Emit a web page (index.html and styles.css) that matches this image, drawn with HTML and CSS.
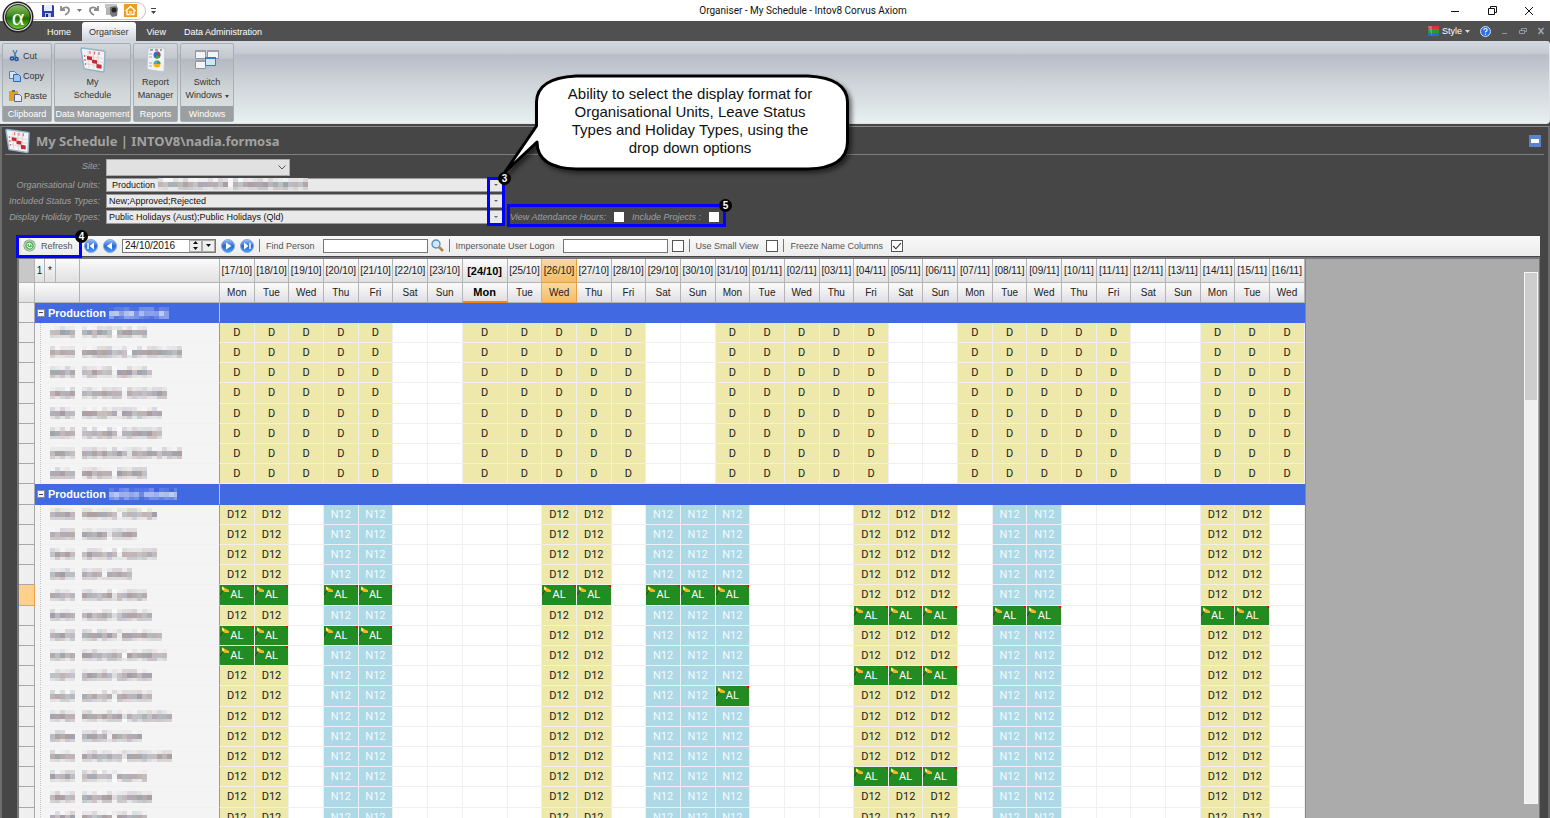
FILE: index.html
```html
<!DOCTYPE html>
<html lang="en">
<head>
    <meta charset="UTF-8">
    <meta name="viewport" content="width=device-width, initial-scale=1.0">
    <title>Organiser - My Schedule - Intov8 Corvus Axiom</title>
    <link rel="stylesheet" href="styles.css">
</head>
<body>
    <svg class="defs" width="0" height="0" aria-hidden="true">
        <defs>
            <linearGradient id="orb" x1="0" y1="0" x2="0" y2="1">
                <stop offset="0" stop-color="#8fbf6a"/>
                <stop offset=".45" stop-color="#3f8a1c"/>
                <stop offset=".55" stop-color="#1f6a08"/>
                <stop offset="1" stop-color="#6fd02c"/>
            </linearGradient>
            <linearGradient id="blueBall" x1="0" y1="0" x2="0" y2="1">
                <stop offset="0" stop-color="#9cc4f4"/>
                <stop offset=".5" stop-color="#2a66d8"/>
                <stop offset="1" stop-color="#4aa4f4"/>
            </linearGradient>
        </defs>
        <symbol id="schedule" viewBox="0 0 26 26">
            <path d="M2 1 L24 4 Q25 4 25 5 L24 24 Q24 25 23 25 L5 22 Q4 22 4 21 L1 2 Q1 1 2 1Z" fill="#f4f4f6" stroke="#8fb4c8" stroke-width="1.5"/>
            <path d="M4 8.500 L23 11.500 M4 12.500 L23 15.500 M5 16.500 L22 19.500 M8 4 L9 21 M13 4 L14 22 M18 5 L18 23" stroke="#e4c4c4" stroke-width=".7"/>
            <path d="M10 4v3 M14.500 4.500v3 M19 5v3 M4.500 8v2 M5 12v2 M5.500 16v2" stroke="#d66" stroke-width="1.100"/>
            <path d="M7 9l5 .8v3.400l-5-.8z M12 12.500l5 .8v3.600l-5-.8z M16.500 17l5 .8v4l-5-.8z" fill="#c62a34"/>
        </symbol>
    </svg>

    <header class="titlebar">
        <button class="orb" aria-label="Application menu">
            <svg viewBox="0 0 32 32" width="32" height="32">
                <circle cx="16" cy="16" r="15.500" fill="#222"/>
                <circle cx="16" cy="16" r="14" fill="#d8d8d8"/>
                <circle cx="16" cy="16" r="12.500" fill="url(#orb)" stroke="#222"/>
            </svg>
            <span class="alpha">α</span>
        </button>
        <div class="quick">
            <button aria-label="Save"><svg width="12" height="12" viewBox="0 0 12 12"><path d="M0 0h11l1 1v11H0z" fill="#2c3fae"/><path d="M2 0h8v6H2z" fill="#e8ecfa"/><path d="M3 8h6v4H3z" fill="#b9c4ee"/><path d="M4 9h2v3H4z" fill="#1b2a80"/></svg></button>
            <button aria-label="Undo"><svg width="11" height="11" viewBox="0 0 11 11"><path d="M1 1v4h4M1.500 5C4 1 9 2 9 5q0 3-4 5" fill="none" stroke="#8b8b8b" stroke-width="1.800"/></svg></button>
            <button aria-label="Undo list"><svg width="5" height="3" viewBox="0 0 5 3"><path d="M0 0h5L2.500 3z" fill="#777"/></svg></button>
            <button aria-label="Redo"><svg width="11" height="11" viewBox="0 0 11 11"><path d="M10 1v4H6M9.500 5C7 1 2 2 2 5q0 3 4 5" fill="none" stroke="#8b8b8b" stroke-width="1.800"/></svg></button>
            <button aria-label="Snapshot"><svg width="13" height="13" viewBox="0 0 13 13"><path d="M0 0h12v4H0z" fill="#c4c4c4"/><path d="M5 3l6-1 2 2-1 8-5 1-3-4z" fill="#777"/><circle cx="9" cy="6" r="2.500" fill="#222"/><path d="M1 4h4v7H1z" fill="#b4b4b4"/></svg></button>
            <button aria-label="Home"><svg width="13" height="13" viewBox="0 0 13 13"><rect width="13" height="13" fill="#f39a1c"/><path d="M1.500 7L6.500 2.500l5 4.500M3 6.500V10.500h7V6.500" fill="none" stroke="#fff" stroke-width="1.400"/><path d="M5 7h3v4H5z" fill="#fbd9a0"/></svg></button>
        </div>
        <button class="quick-more" aria-label="Customise toolbar"><svg width="5" height="6" viewBox="0 0 5 6"><path d="M0 0h5v1H0zM0 3h5L2.500 6z" fill="#444"/></svg></button>
        <h1>Organiser - My Schedule - Intov8 Corvus Axiom</h1>
        <div class="win-buttons">
            <button aria-label="Minimise"><svg width="10" height="10" viewBox="0 0 10 10"><path d="M1 5.500h8" stroke="#111"/></svg></button>
            <button aria-label="Restore"><svg width="10" height="10" viewBox="0 0 10 10"><path d="M1.500 2.500h6v6h-6zM3.500 2V.500h6v6H8" fill="none" stroke="#111"/></svg></button>
            <button aria-label="Close"><svg width="10" height="10" viewBox="0 0 10 10"><path d="M1 1l8 8M9 1L1 9" stroke="#111"/></svg></button>
        </div>
    </header>

    <nav class="tabs">
        <a href="#">Home</a>
        <a href="#" class="active">Organiser</a>
        <a href="#">View</a>
        <a href="#">Data Administration</a>
        <div class="tab-tools">
            <button class="style-btn">
                <svg width="11" height="10" viewBox="0 0 11 10"><path d="M0 0h11v3H0z" fill="#d33"/><path d="M0 3h11v4H0z" fill="#2b9a35"/><path d="M0 7h11v3H0z" fill="#36c"/><path d="M0 0h4v10z" fill="#8cf" opacity=".4"/></svg>
                Style
                <svg width="5" height="3" viewBox="0 0 5 3"><path d="M0 0h5L2.500 3z" fill="#ddd"/></svg>
            </button>
            <button aria-label="Help"><svg width="11" height="11" viewBox="0 0 11 11"><circle cx="5.500" cy="5.500" r="5" fill="#2f6fe0" stroke="#cfe0fa"/><path d="M3.800 4.200q0-1.700 1.700-1.700t1.700 1.500q0 1-1.700 1.800v.8M5.500 7.600v1.200" fill="none" stroke="#fff" stroke-width="1.100"/></svg></button>
            <button aria-label="Minimise document"><svg width="8" height="8" viewBox="0 0 8 8"><path d="M1 6.500h5" stroke="#8f9aa6"/></svg></button>
            <button aria-label="Restore document"><svg width="8" height="8" viewBox="0 0 8 8"><path d="M.500 3.500h5v3h-5zM2.500 3V1.500h5v3H6" fill="none" stroke="#8f9aa6"/></svg></button>
            <button aria-label="Close document"><svg width="8" height="8" viewBox="0 0 8 8"><path d="M1.500 1l5 6M6.500 1l-5 6" stroke="#9fb0c0" stroke-width="1.300"/></svg></button>
        </div>
    </nav>

    <div class="ribbon">
        <section class="group clipboard">
            <div class="group-body">
                <button><svg width="12" height="12" viewBox="0 0 12 12"><path d="M4 0l3 7M8 0L5 7" stroke="#4a78b0" stroke-width="1.200"/><circle cx="3" cy="8.500" r="1.600" fill="none" stroke="#1d4f9a" stroke-width="1.500"/><circle cx="7.500" cy="9" r="1.600" fill="none" stroke="#1d4f9a" stroke-width="1.500"/></svg>Cut</button>
                <button><svg width="12" height="12" viewBox="0 0 12 12"><path d="M.500 1.500h5l2 2v5h-7z" fill="#d6e6fa" stroke="#4c82c8"/><path d="M4.500 4.500h5l2 2v5h-7z" fill="#9fc4f2" stroke="#2f66b8"/></svg>Copy</button>
                <button><svg width="13" height="12" viewBox="0 0 13 12"><path d="M0 1h9v10H0z" fill="#e0a020"/><path d="M3 0h3v2H3z" fill="#6b6b6b"/><path d="M5.500 4.500h5l2 2v5h-7z" fill="#e8eef8" stroke="#556a90"/></svg>Paste</button>
            </div>
            <footer>Clipboard</footer>
        </section>
        <section class="group data">
            <div class="group-body">
                <button class="big"><svg width="26" height="26"><use href="#schedule"/></svg>My<br>Schedule</button>
            </div>
            <footer>Data Management</footer>
        </section>
        <section class="group reports">
            <div class="group-body">
                <button class="big"><svg width="26" height="26" viewBox="0 0 26 26"><path d="M5 1h16l1 2-1 22-14-2-3-1z" fill="#f0f2f5" stroke="#bcc4cc"/><path d="M7 3h12" stroke="#555" stroke-dasharray="3 2"/><circle cx="14" cy="8" r="3.500" fill="#2c6fd0"/><path d="M14 8V4.500A3.500 3.500 0 0 1 17 9.500z" fill="#d8342c"/><path d="M14 8l3 2q-2 2.500-5 1z" fill="#45a838"/><circle cx="14" cy="17" r="3.500" fill="#f0b418"/><path d="M14 17v-3.500a3.500 3.500 0 0 1 3.500 3.500z" fill="#45a838"/><path d="M14 17h-3.500a3.500 3.500 0 0 1 3.500-3.500z" fill="#4aa8e0"/><path d="M6 7h3M6 10h3M6 16h3M6 19h3" stroke="#aaa"/></svg>Report<br>Manager</button>
            </div>
            <footer>Reports</footer>
        </section>
        <section class="group windows">
            <div class="group-body">
                <button class="big"><svg width="26" height="26" viewBox="0 0 26 26"><path d="M1.500 3.500h10v8h-10zM13.500 3.500h11v8h-11zM1.500 13.500h10v8h-10z" fill="#f2f3f5" stroke="#8c949c"/><path d="M1 3h11v2H1zM13 3h12v2H13zM1 13h11v2H1z" fill="#99a1a8"/><path d="M11.500 10.500h10v8h-10z" fill="#d4e4f8" stroke="#3c78c8"/><path d="M11 10h11v2H11z" fill="#3c78c8"/></svg>Switch<br>Windows <svg class="tiny" width="4" height="3" viewBox="0 0 4 3"><path d="M0 0h4L2 3z" fill="#444"/></svg></button>
            </div>
            <footer>Windows</footer>
        </section>
    </div>

    <main class="page">
        <div class="page-title">
            <svg width="25" height="26"><use href="#schedule"/></svg>
            <h2>My Schedule | INTOV8\nadia.formosa</h2>
            <button class="collapse" aria-label="Collapse"></button>
        </div>

        <form class="filters">
            <label for="site">Site:</label>
            <select id="site"><option></option></select>

            <label for="units">Organisational Units:</label>
            <div class="combo units">
                <input id="units" type="text" value="Production">
                <span class="mosaic" data-words="150" data-seed="91"></span>
                <button type="button" aria-label="Choose units"></button>
            </div>

            <label for="status">Included Status Types:</label>
            <div class="combo">
                <input id="status" type="text" value="New;Approved;Rejected">
                <button type="button" aria-label="Choose status types"></button>
            </div>

            <label for="holiday">Display Holiday Types:</label>
            <div class="combo">
                <input id="holiday" type="text" value="Public Holidays (Aust);Public Holidays (Qld)">
                <button type="button" aria-label="Choose holiday types"></button>
            </div>
            <div class="options">
                <label for="attendance">View Attendance Hours:</label>
                <input id="attendance" type="checkbox">
                <label for="projects">Include Projects :</label>
                <input id="projects" type="checkbox">
            </div>
        </form>

        <div class="toolbar">
            <button class="refresh"><svg width="13" height="13" viewBox="0 0 13 13"><circle cx="6.500" cy="6.500" r="6" fill="#7a8a7a"/><circle cx="6.500" cy="6.500" r="4.800" fill="#5cb860" stroke="#d8ecd8"/><path d="M4 5.500a3 3 0 0 1 5 1M9 8a3 3 0 0 1-5-1.500M6.500 4v3" fill="none" stroke="#fff"/></svg>Refresh</button>
            <button aria-label="First"><svg width="14" height="14" viewBox="0 0 14 14"><circle cx="7" cy="7" r="6.500" fill="url(#blueBall)" stroke="#7fa6e0"/><path d="M4 4v6" stroke="#fff" stroke-width="1.500"/><path d="M10 3.500v7L5.500 7z" fill="#fff"/></svg></button>
            <button aria-label="Previous"><svg width="14" height="14" viewBox="0 0 14 14"><circle cx="7" cy="7" r="6.500" fill="url(#blueBall)" stroke="#7fa6e0"/><path d="M9 3.500v7L3.500 7z" fill="#fff"/></svg></button>
            <div class="date">
                <input type="text" value="24/10/2016" aria-label="Date">
                <button class="spin" aria-label="Change date"><svg width="5" height="9" viewBox="0 0 5 9"><path d="M0 3h5L2.500 0zM0 6h5L2.500 9z" fill="#111"/></svg></button>
                <button class="drop" aria-label="Open calendar"><svg width="5" height="3" viewBox="0 0 5 3"><path d="M0 0h5L2.500 3z" fill="#111"/></svg></button>
            </div>
            <button aria-label="Next"><svg width="14" height="14" viewBox="0 0 14 14"><circle cx="7" cy="7" r="6.500" fill="url(#blueBall)" stroke="#7fa6e0"/><path d="M5 3.500v7L10.500 7z" fill="#fff"/></svg></button>
            <button aria-label="Last"><svg width="14" height="14" viewBox="0 0 14 14"><circle cx="7" cy="7" r="6.500" fill="url(#blueBall)" stroke="#7fa6e0"/><path d="M10 4v6" stroke="#fff" stroke-width="1.500"/><path d="M4 3.500v7L8.500 7z" fill="#fff"/></svg></button>
            <div class="field find">
                <label for="find">Find Person</label>
                <input id="find" type="text">
                <button aria-label="Search"><svg width="13" height="13" viewBox="0 0 13 13"><path d="M8 8l4 4" stroke="#b8843c" stroke-width="2.500"/><circle cx="5" cy="5" r="4" fill="#cfe8fa" stroke="#5a8cc0" stroke-width="1.300"/></svg></button>
            </div>
            <div class="field logon">
                <label for="logon">Impersonate User Logon</label>
                <input id="logon" type="text">
                <input type="checkbox" aria-label="Impersonate">
            </div>
            <div class="field small-view">
                <label for="small">Use Small View</label>
                <input id="small" type="checkbox">
            </div>
            <div class="field freeze">
                <label for="freeze">Freeze Name Columns</label>
                <input id="freeze" type="checkbox" checked>
            </div>
        </div>

        <div class="grid">
            <table>
                <colgroup>
                    <col class="c-head"><col class="c-one"><col class="c-star"><col class="c-code"><col class="c-name">
                </colgroup>
                <thead></thead>
                <tbody></tbody>
            </table>
            <div class="scroll"><div class="thumb"></div></div>
        </div>
    </main>

    <div class="mark mark-drop"><b>3</b></div>
    <div class="mark mark-refresh"><b>4</b></div>
    <div class="mark mark-options"><b>5</b></div>
    <div class="callout">
        <svg width="360" height="114" viewBox="0 0 360 114">
            <path d="M76 6H308Q347 8 347.500 32V72Q347 98 308 99H76Q37 98 37 72L5 102L36.500 56V32Q37 8 76 6Z" fill="#fff" stroke="#000" stroke-width="3" stroke-linejoin="round"/>
        </svg>
        <p>Ability to select the display format for Organisational Units, Leave Status Types and Holiday Types, using the drop down options</p>
    </div>

    <script src="script.js"></script>
</body>
</html>
```

FILE: styles.css
```css
* {
    box-sizing: border-box;
}
body {
    display: flex;
    flex-direction: column;
    height: 100vh;
    margin: 0;
    overflow: hidden;
    background-color: #464646;
    color: #333;
    font-family: "Liberation Sans", Arial, sans-serif;
    font-size: 9px;
}
button {
    display: flex;
    align-items: center;
    padding: 0;
    border: none;
    background: none;
    color: inherit;
    font: inherit;
}
input, select {
    margin: 0;
    font: inherit;
}
h1, h2, p {
    margin: 0;
}
.defs {
    position: absolute;
}

/* title bar */
.titlebar {
    position: relative;
    display: flex;
    align-items: center;
    flex: none;
    height: 21px;
    background-color: #fff;
}
.orb {
    position: absolute;
    left: 2px;
    top: 1px;
    z-index: 2;
}
.alpha {
    position: absolute;
    left: 0;
    width: 32px;
    color: #fff;
    font: 24px/28px "Liberation Serif", serif;
    text-align: center;
}
.quick {
    display: flex;
    align-items: center;
    gap: 6px;
    height: 18px;
    margin-left: 26px;
    padding: 0 8px 0 16px;
    border: 1px solid #c4c4c4;
    border-left: none;
    border-radius: 0 9px 9px 0;
}
.quick button {
    flex: none;
}
.quick-more {
    margin-left: 5px;
}
.titlebar h1 {
    flex: 1;
    color: #111;
    font: 10px Roboto, sans-serif;
    text-align: center;
}
.win-buttons {
    display: flex;
    gap: 27px;
    padding-right: 16px;
}

/* tabs */
.tabs {
    display: flex;
    flex: none;
    gap: 4px;
    height: 20px;
    padding-left: 40px;
    background-color: #505050;
}
.tabs a {
    height: 19px;
    margin-top: 1px;
    padding: 0 7px;
    color: #fff;
    line-height: 20px;
    text-decoration: none;
}
.tabs a.active {
    border-radius: 3px 3px 0 0;
    background: linear-gradient(#fff, #cdd2dc);
    color: #333;
}
.tab-tools {
    display: flex;
    align-items: center;
    gap: 10px;
    margin-left: auto;
    padding-right: 5px;
    color: #fff;
}
.style-btn {
    gap: 3px;
}

/* ribbon */
.ribbon {
    display: flex;
    flex: none;
    gap: 2px;
    height: 83px;
    padding: 2px 2px 1px;
    border: 1px solid #dfe3ea;
    border-width: 0 1px 1px 0;
    border-radius: 0 3px 4px 0;
    background: linear-gradient(#d4d8e0, #c6cad3 15%, #b8bdc8 17%, #cdd3d8 50%, #e8f0f0);
}
.group {
    display: flex;
    flex-direction: column;
    border: 1px solid #a9aeb4;
    border-radius: 2px;
    background: linear-gradient(#d4d8dd, #c4c8ce 18%, #b4b9c2 20%, #d0d5d7 60%, #dfe5e5);
}
.group-body {
    flex: 1;
}
.group footer {
    height: 15px;
    background-color: #9b9fa1;
    color: #fff;
    line-height: 16px;
    text-align: center;
    white-space: nowrap;
}
.clipboard {
    width: 50px;
}
.data {
    width: 77px;
}
.reports {
    width: 45px;
}
.windows {
    width: 54px;
}
.clipboard .group-body {
    padding-top: 2px;
}
.clipboard button {
    gap: 2px;
    height: 20px;
    padding-left: 6px;
}
.big {
    display: block;
    width: 100%;
    padding-top: 3px;
    line-height: 13px;
    text-align: center;
}
.big > svg {
    display: block;
    margin: 0 auto 3px;
}
.big > svg.tiny {
    display: inline;
    margin: 0;
}

/* page */
.page {
    display: flex;
    flex: 1;
    flex-direction: column;
    min-height: 0;
    margin-top: 2px;
    padding: 0 8px 0 15px;
    border: 2px solid #6c6c6c;
    border-top: 1px solid #888;
    border-bottom: none;
}
.page-title {
    display: flex;
    align-items: center;
    flex: none;
    gap: 6px;
    height: 28px;
    margin: 0 -4px 0 -12px;
    padding-right: 3px;
    border-bottom: 1px solid #7e7e7e;
}
.page-title h2 {
    color: #a2a2a2;
    font: bold 13px "Noto Sans", sans-serif;
}
.collapse {
    width: 12px;
    height: 12px;
    margin-left: auto;
    border: 3px solid #5b84cc;
    border-width: 4px 2px;
    background-color: #fff;
}
.filters {
    display: grid;
    flex: none;
    grid-template-columns: 93px 398px auto;
    grid-template-rows: 17px 14px 14px 14px;
    gap: 2px 6px;
    justify-content: start;
    height: 81px;
    margin-left: -10px;
    padding-top: 4px;
}
.filters label {
    grid-column: 1;
    color: #a0a0a0;
    font-style: italic;
    line-height: 14px;
    text-align: right;
    white-space: nowrap;
}
#site {
    appearance: none;
    width: 184px;
    height: 17px;
    border: 1px solid #aaa;
    background: url("data:image/svg+xml,%3Csvg xmlns='http://www.w3.org/2000/svg' width='8' height='5'%3E%3Cpath d='M.5 .5L4 4L7.500 .5' fill='none' stroke='%23555'/%3E%3C/svg%3E") right 3px center no-repeat #e1e1e1;
}
.combo {
    position: relative;
    display: flex;
    border: 1px solid #999;
    background-color: #e9e9e9;
}
.combo input {
    flex: 1;
    min-width: 0;
    padding: 0 2px;
    border: none;
    background: none;
    color: #111;
}
.combo.units input {
    padding-left: 5px;
}
.combo button {
    width: 16px;
    justify-content: center;
    border-left: 1px solid #999;
}
.combo button::after {
    content: "";
    border: 2px solid transparent;
    border-top-color: #666;
    border-bottom: none;
}
.combo .mosaic {
    position: absolute;
    left: 51px;
    top: -1px;
}
.options {
    display: flex;
    align-items: center;
    grid-column: 3;
    gap: 8px;
}
.options label {
    color: #a0a0a0;
}
.options input {
    appearance: none;
    width: 10px;
    height: 10px;
    background-color: #fff;
}

/* toolbar */
.toolbar {
    display: flex;
    align-items: center;
    flex: none;
    gap: 5px;
    height: 20px;
    padding: 0 0 1px 6px;
    background: linear-gradient(#f8f8f8, #ececec);
    color: #555;
    white-space: nowrap;
}
.toolbar input[type="text"] {
    height: 14px;
    border: 1px solid #777;
    background-color: #fff;
}
.refresh {
    gap: 5px;
    width: 56px;
}
.date {
    display: flex;
    width: 94px;
    height: 14px;
    border: 1px solid #777;
    background-color: #fff;
}
.toolbar .date input {
    flex: 1;
    min-width: 0;
    height: 12px;
    border: none;
    color: #111;
    font-size: 10px;
}
.spin, .drop {
    width: 13px;
    justify-content: center;
    border: 1px solid #aaa;
    background-color: #eee;
}
.field {
    display: flex;
    align-items: center;
    height: 13px;
    padding-left: 6px;
    border-left: 1px solid #777;
}
.field label {
    margin-right: 8px;
}
.field input[type="text"] {
    width: 105px;
}
.field button {
    margin: 0 0 0 3px;
}
.field input[type="checkbox"] {
    appearance: none;
    width: 12px;
    height: 12px;
    border: 1px solid #555;
    background-color: #fff;
}
.field input:checked {
    background: url("data:image/svg+xml,%3Csvg xmlns='http://www.w3.org/2000/svg' viewBox='0 0 9 9'%3E%3Cpath d='M1 4.500l2.500 2.500L8 2' fill='none' stroke='%23333'/%3E%3C/svg%3E") #fff;
}
.logon input[type="checkbox"] {
    margin-left: 4px;
}

/* schedule grid */
.grid {
    position: relative;
    flex: 1;
    overflow: hidden;
    margin-top: 1px;
    border: 2px solid #77777c;
    border-width: 2px 1px 0 2px;
    background-color: #ababab;
}
table {
    table-layout: fixed;
    width: 1287px;
    border-spacing: 0;
    border-right: 1px solid #888;
}
.c-head {
    width: 16px;
}
.c-one {
    width: 10px;
}
.c-star {
    width: 11px;
}
.c-code {
    width: 24px;
}
.c-name {
    width: 140px;
}
.c-today {
    width: 45px;
}
th, td {
    overflow: hidden;
    height: 20px;
    padding: 0;
    border: 1px solid #efefef;
    border-width: 0 1px 1px 0;
    background-color: #fff;
    line-height: 16px;
    text-align: center;
    white-space: nowrap;
}
tbody tr:nth-child(5n) td {
    height: 21px;
}
th {
    border-color: #b4b4b4;
    background: linear-gradient(#fbfbfb, #e0e0e0);
    color: #222;
    font-size: 10px;
    font-weight: normal;
}
thead tr:first-child th {
    height: 24px;
}
thead th.today {
    color: #000;
    font-size: 11px;
    font-weight: bold;
}
thead th.day.today {
    border-bottom: 2px solid #f58410;
}
thead th.hot {
    border-color: #e8a040;
    background: linear-gradient(#fbd9a0, #f3bd62);
}
thead th.corner {
    background: #c8c8c8;
}
td.rowhead {
    border-color: #a8a8a8;
    background-color: #efefef;
}
td.rowhead.current {
    background-color: #ffd08a;
    border-color: #f0a040;
}
td.person {
    border-color: #f1f1f1;
    border-right-color: #999;
    background-color: #f4f4f4;
    text-align: left;
}
.person-name {
    height: 19px;
    margin-left: 5px;
    padding: 3px 0 0 9px;
    border-left: 1px dotted #c4c4c4;
}
.mosaic svg {
    display: block;
}
td.unit, td.band {
    background-color: #4169e1;
    border-color: #4169e1;
}
td.unit {
    border-right-color: #b8c4f0;
    text-align: left;
}
.unit-name {
    display: flex;
    align-items: center;
    gap: 3px;
    padding-left: 2px;
    color: #fff;
    font: bold 11px/16px "Liberation Sans", Arial, sans-serif;
}
.expander {
    width: 8px;
    height: 8px;
    border: 1px solid #889;
    background: linear-gradient(#446, #446) center / 4px 1px no-repeat #f4f4f4;
}
td.shift {
    font-family: Roboto, sans-serif;
    font-size: 11px;
}
td.d {
    background-color: #eee8aa;
    color: #222;
}
td.n {
    background-color: #add8e6;
    color: #f4fbfd;
}
td.al {
    position: relative;
    background-color: #228b22;
    color: #fff;
}
td.al svg {
    position: absolute;
    left: 0;
    top: 1px;
}
td.al::after {
    content: "";
    position: absolute;
    right: 0;
    top: 0;
    border-top: 3px solid #f00;
    border-left: 3px solid transparent;
}
.scroll {
    position: absolute;
    right: 1px;
    top: 13px;
    bottom: 14px;
    width: 14px;
    border: 1px solid #f6f6f6;
    background-color: #f0f0f0;
}
.thumb {
    height: 127px;
    background-color: #cdcdcd;
}

/* annotations */
.mark {
    position: absolute;
    border: 3px solid #00f;
}
.mark b {
    position: absolute;
    right: -9px;
    top: -8px;
    width: 13px;
    height: 13px;
    border-radius: 50%;
    background-color: #000;
    color: #fff;
    font: bold 10px/13px "Liberation Sans", Arial, sans-serif;
    text-align: center;
}
.mark-drop {
    left: 487px;
    top: 177px;
    width: 18px;
    height: 49px;
}
.mark-refresh {
    left: 16px;
    top: 235px;
    width: 66px;
    height: 23px;
}
.mark-options {
    left: 507px;
    top: 204px;
    width: 219px;
    height: 23px;
}
.callout {
    position: absolute;
    left: 500px;
    top: 70px;
    width: 360px;
}
.callout svg {
    display: block;
    overflow: visible;
    filter: drop-shadow(3px 3px 2px rgba(0, 0, 0, 0.5));
}
.callout p {
    position: absolute;
    left: 60px;
    top: 15px;
    width: 260px;
    color: #111;
    font: 15px/18px "Liberation Sans", Arial, sans-serif;
    text-align: center;
}
```

FILE: script.js
```js
const thead = document.querySelector('thead');
const tbody = document.querySelector('tbody');
const colgroup = document.querySelector('colgroup');
const dayNames = ['Sun', 'Mon', 'Tue', 'Wed', 'Thu', 'Fri', 'Sat'];
const days = [];
for (let i = 0; i < 31; i++) {
    days.push(new Date(2016, 9, 17 + i));
}
const today = 7;
const hot = 9;

// rows hold the width of each redacted name
const units = [
    {
        hidden: 60,
        rows: [65, 100, 69, 85, 79, 79, 99, 64],
        leave: {},
        shift: i => [0, 6].includes(days[i].getDay()) ? '' : 'D'
    },
    {
        hidden: 68,
        rows: [75, 53, 74, 48, 64, 69, 80, 85, 69, 69, 90, 59, 90, 64, 69, 64],
        leave: {
            4: [0, 1, 3, 4, 9, 10, 12, 13, 14],
            5: [18, 19, 20, 22, 23, 28, 29],
            6: [0, 1, 3, 4],
            7: [0, 1],
            8: [18, 19, 20],
            9: [14],
            13: [18, 19, 20]
        },
        shift: i => {
            if ([0, 1, 9, 10, 18, 19, 20, 28, 29].includes(i)) return 'D12';
            if ([3, 4, 12, 13, 14, 22, 23].includes(i)) return 'N12';
            return '';
        }
    }
];

const pad = n => String(n).padStart(2, '0');

// redacted text: a strip of 5px blocks, darkest along the middle
function mosaic(start, end, seed, light) {
    let rects = '';
    let s = seed * 7919 + 17;
    const gap = start + 5 * Math.round((end - start) * 0.45 / 5);
    for (let x = start; x < end; x += 5) {
        const faint = end - start > 35 && x === gap;
        for (let y = 0; y < 3; y++) {
            s = (s * 1103515245 + 12345) % 2147483648;
            const r = (s >> 8) % 40;
            const hue = [0, 340, 200, 270][(s >> 16) % 4];
            let base = light ? [56, 72, 60][y] : [84, 64, 78][y];
            if (faint) base = light ? 58 : 86;
            rects += `<rect x="${x}" y="${y * 5 - 1}" width="5" height="5" fill="hsl(${light ? 226 : hue} ${light ? 70 : 7}% ${base + r / 3}%)"/>`;
        }
    }
    return rects;
}

function strip(width, rects) {
    return `<svg width="${width}" height="12" viewBox="0 0 ${width} 12" shape-rendering="crispEdges">${rects}</svg>`;
}

const horn = '<svg width="10" height="9" viewBox="0 0 10 9"><path d="M0 9L3 4" stroke="#3a3a20"/><path d="M2 0l3 2 4 2v2L5 6 2 4z" fill="#f2b822"/><path d="M2 1l2 1v2L2 3z" fill="#fff3a0"/></svg>';

for (let i = 0; i < 31; i++) {
    const col = document.createElement('col');
    if (i === today) col.className = 'c-today';
    colgroup.append(col);
}

const mark = i => i === today ? 'today' : i === hot ? 'hot' : '';
thead.innerHTML =
    '<tr><th class="corner"></th><th>1</th><th>*</th><th></th><th></th>' +
    days.map((d, i) => `<th class="${mark(i)}">[${pad(d.getDate())}/${pad(d.getMonth() + 1)}]</th>`).join('') +
    '</tr><tr><th></th><th colspan="3"></th><th></th>' +
    days.map((d, i) => `<th class="day ${mark(i)}">${dayNames[d.getDay()]}</th>`).join('') + '</tr>';

let html = '';
units.forEach((unit, u) => {
    html += `<tr><td class="rowhead"></td><td class="unit" colspan="4"><div class="unit-name"><span class="expander"></span>Production<span class="mosaic">${strip(unit.hidden, mosaic(0, unit.hidden, u + 3, true))}</span></div></td><td class="band" colspan="31"></td></tr>`;
    unit.rows.forEach((width, r) => {
        const leave = unit.leave[r] || [];
        const seed = u * 20 + r + 1;
        const name = mosaic(0, 25, seed + 50) + mosaic(32, 32 + width, seed);
        html += `<tr><td class="rowhead${u === 1 && r === 4 ? ' current' : ''}"></td><td class="person" colspan="4"><div class="person-name mosaic">${strip(135, name)}</div></td>`;
        days.forEach((d, i) => {
            if (leave.includes(i)) {
                html += `<td class="shift al">${horn}AL</td>`;
            } else {
                const s = unit.shift(i);
                html += `<td class="shift ${s.charAt(0).toLowerCase()}">${s}</td>`;
            }
        });
        html += '</tr>';
    });
});
tbody.innerHTML = html;

document.querySelectorAll('.combo .mosaic').forEach(el => {
    const width = Number(el.dataset.words);
    el.innerHTML = strip(width, mosaic(0, width, Number(el.dataset.seed)));
});
```
